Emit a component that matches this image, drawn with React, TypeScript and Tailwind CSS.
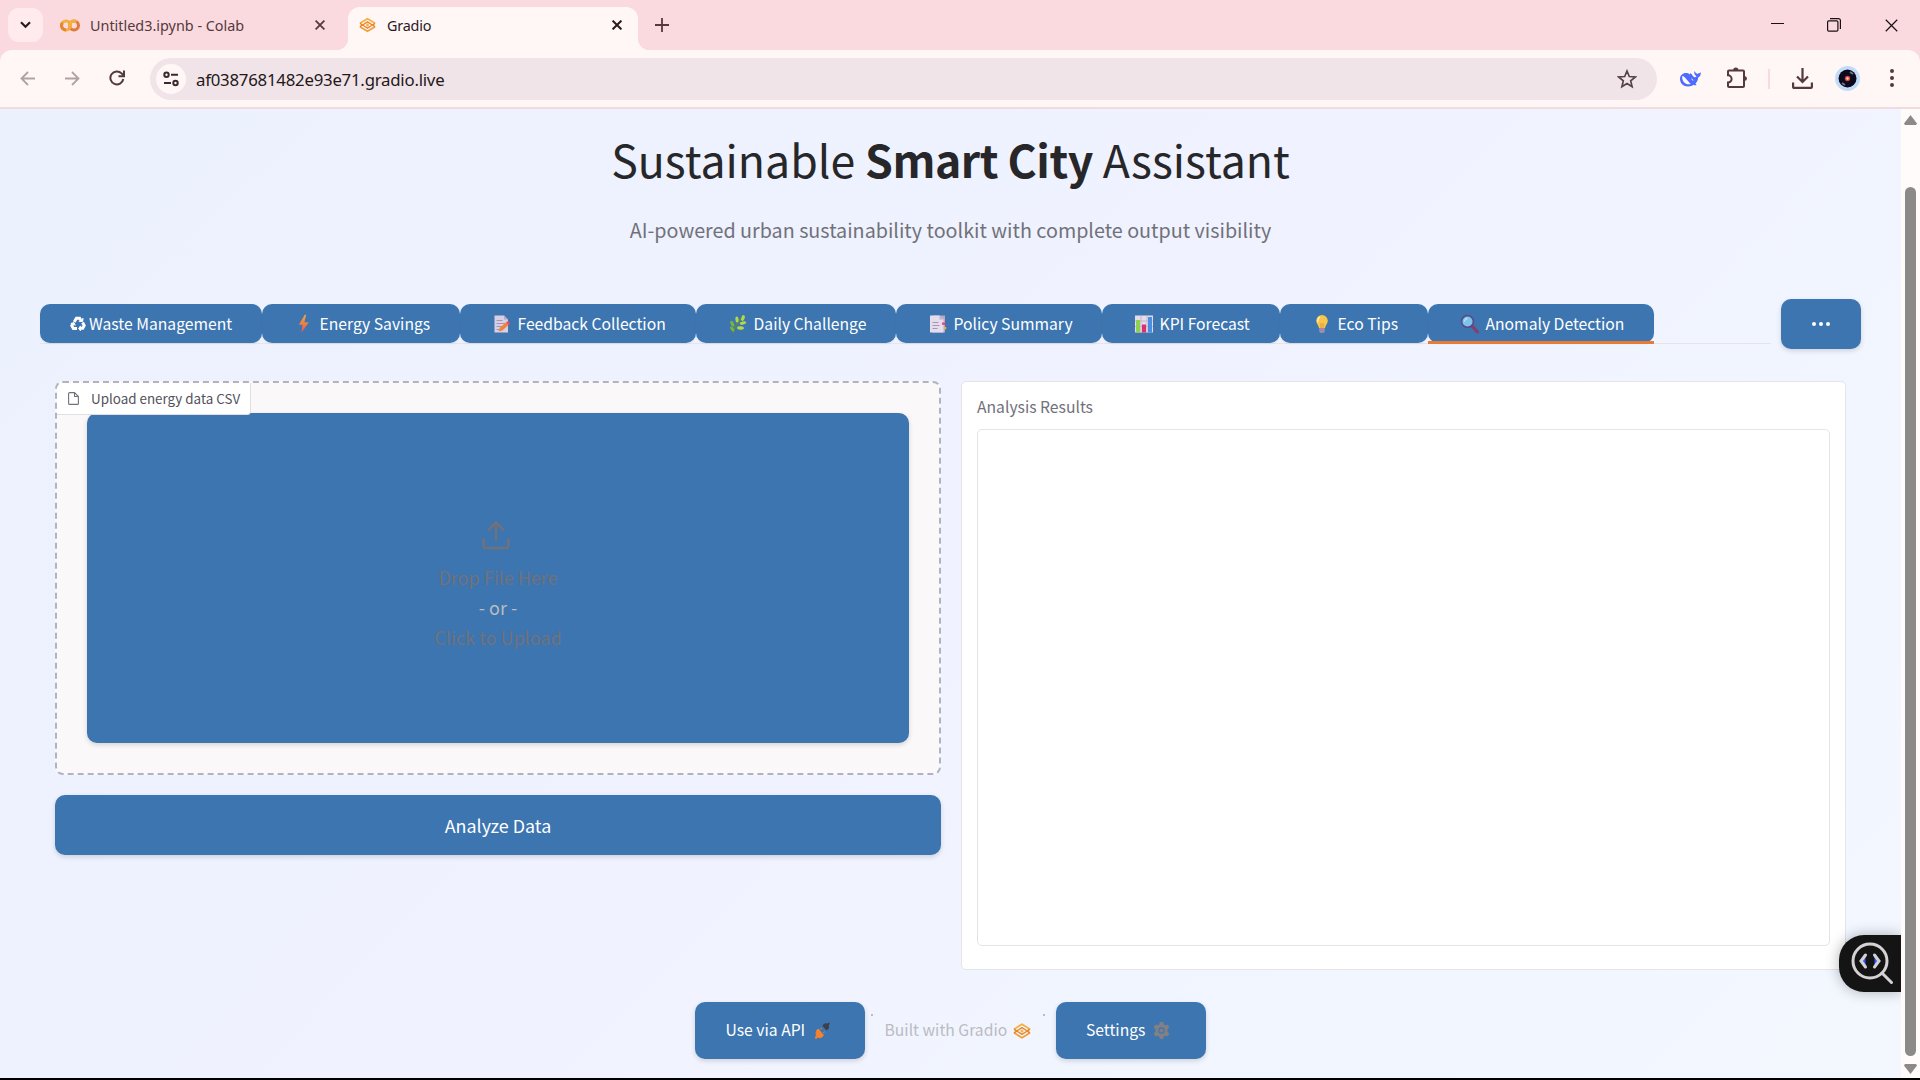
import React from "react";

const SANS = "font-['Noto_Sans_CJK_SC',sans-serif]";

type IconProps = { className?: string };

const Cross = ({ s = 10, w = 1.8 }: { s?: number; w?: number }) => (
  <svg width={s} height={s} viewBox="0 0 10 10" fill="none" stroke="currentColor" strokeWidth={w} className="shrink-0">
    <path d="M.6.6 9.4 9.4M9.4.6.6 9.4" />
  </svg>
);

const GradioLogo = ({ className = "" }: IconProps) => (
  <svg viewBox="0 0 18 16" className={className} fill="none" strokeLinejoin="round" strokeWidth="1.900">
    <path d="M1 6.200 9 1.300l8 4.900" stroke="#f3b340" />
    <path d="m1 9.800 8 4.900 8-4.900" stroke="#f0a238" />
    <path d="M1 6.200 3.800 8 1 9.800M17 6.200 14.200 8 17 9.800" stroke="#e8842c" strokeWidth="1.500" />
    <path d="M3.800 8 9 4.700 14.200 8 9 11.300z" stroke="#e8842c" strokeWidth="1.400" />
    <circle cx="9" cy="8" r="1.500" fill="#f3b340" />
  </svg>
);

const Recycle = () => (
  <svg viewBox="0 0 16 16" width="16" height="16" fill="none" stroke="#fff" strokeWidth="3">
    <path d="m4.200 6 2.200-3.700h3.200l1 1.700" />
    <path d="m12.600 6.500 1.600 2.900-1.500 2.900H9.600" />
    <path d="M7 12.600H3.400L1.800 9.700 3 7.500" />
    <path d="m8.700 5.200 3.900.4.500-3.500M10.700 9.800l-2.200 2.700 2.200 2.500M.8 7.500l3.200-.9 1.300 3" strokeWidth="1" fill="#fff" />
  </svg>
);
const Bolt = () => (
  <svg viewBox="0 0 20 20" width="20" height="20">
    <defs><linearGradient id="bolt" x1="0" y1="0" x2="0" y2="1"><stop stopColor="#f5a63c" /><stop offset="1" stopColor="#e8554b" /></linearGradient></defs>
    <path d="M10.800.8 4.800 10.800h3.700L7.400 18.800 14.800 8.300H10.400L12.200.8z" fill="url(#bolt)" />
  </svg>
);
const Memo = () => (
  <svg viewBox="0 0 20 20" width="20" height="20">
    <path d="M2.500 1.500h9.500l4 4v13H2.500z" fill="#d9cfe4" />
    <path d="M12 1.500v4h4z" fill="#b7a7c9" />
    <path d="M4.500 6.500h6M4.500 9.500h9M4.500 12.500h7M4.500 15.500h4" stroke="#a596b5" strokeWidth="1.100" />
    <path d="m6.500 17.500 1.500-4 6-5 2.300 2.700-6 5.200z" fill="#f0843c" /><path d="m14 8.500 2-1.500 2.200 2.700-1.900 1.500z" fill="#ec4b5e" />
  </svg>
);
const Herb = () => (
  <svg viewBox="0 0 20 20" width="20" height="20">
    <path d="M5 19C7 12 10 7 15 3" stroke="#5f8f35" strokeWidth="1.400" fill="none" />
    <g fill="#b5d84a"><ellipse cx="15" cy="4" rx="1.700" ry="3" transform="rotate(20 15 4)" /><ellipse cx="9" cy="5.500" rx="1.600" ry="3" transform="rotate(-5 9 5.500)" /><ellipse cx="15" cy="9" rx="3.200" ry="1.500" transform="rotate(-12 15 9)" /><ellipse cx="12.500" cy="14" rx="3.500" ry="1.700" transform="rotate(5 12.500 14)" /></g>
    <g fill="#7fb23c"><ellipse cx="4.300" cy="9.800" rx="1.600" ry="3.200" transform="rotate(-25 4.300 9.800)" /><ellipse cx="4.200" cy="15" rx="1.400" ry="2.800" transform="rotate(-40 4.200 15)" /></g>
  </svg>
);
const BookmarkTabs = () => (
  <svg viewBox="0 0 20 20" width="20" height="20">
    <path d="M4.500 1.500H17v17H4.500z" fill="#b8a9c9" />
    <path d="M2 1.500h9.500l4 4v13H2z" fill="#e5dcec" />
    <path d="M11.500 1.500v4h4z" fill="#bfb0cf" />
    <path d="M4.500 8.500h6M4.500 11.500h7M4.500 14.500h5" stroke="#a596b5" strokeWidth="1.100" />
    <path d="M14 8.500h3.500v2.300H14z" fill="#e8437c" /><path d="M16 13h2.300v2.300H16z" fill="#eeb03a" />
  </svg>
);
const Chart = () => (
  <svg viewBox="0 0 20 20" width="20" height="20">
    <path d="M1 1.500h18v17H1z" fill="#e4dcea" /><path d="M1 7h18M1 12.500h18M7 1.500v17M13 1.500v17" stroke="#bbaec8" strokeWidth=".8" />
    <path d="M2 6h4v12.500H2z" fill="#92d04f" /><path d="M8 10.500h4v8H8z" fill="#d8326f" /><path d="M14 3h4v15.500h-4z" fill="#4a8fe0" />
  </svg>
);
const Bulb = () => (
  <svg viewBox="0 0 20 20" width="20" height="20">
    <path d="M10 1a5.800 5.800 0 0 0-5.800 5.800c0 3 2.300 4.200 2.800 7.200h6c.5-3 2.800-4.200 2.800-7.200A5.800 5.800 0 0 0 10 1z" fill="#f8c64b" />
    <path d="M8 3c-2 1-2.500 3-2 5" stroke="#fdeeb0" strokeWidth="1.500" fill="none" /><path d="M9 9v5M11 9v5" stroke="#dd8a35" strokeWidth=".8" />
    <path d="M7.200 14h5.600v3.500L11.500 19h-3l-1.300-1.500z" fill="#9a8fa8" />
  </svg>
);
const Lens = () => (
  <svg viewBox="0 0 20 20" width="20" height="20">
    <path d="m12 12 5.500 6" stroke="#873d70" strokeWidth="3.200" strokeLinecap="round" />
    <circle cx="7.500" cy="7.500" r="5.900" fill="#7cc4ea" stroke="#5a4a86" strokeWidth="1.600" />
    <path d="M4.500 7.500a3 3 0 0 1 3-3" stroke="#b9e5fa" strokeWidth="1.300" fill="none" />
  </svg>
);

const TABS: { label: string; w: string; icon: React.ReactNode }[] = [
  { label: "Waste Management", w: "w-[222px]", icon: <Recycle /> },
  { label: "Energy Savings", w: "w-[198px]", icon: <Bolt /> },
  { label: "Feedback Collection", w: "w-[236px]", icon: <Memo /> },
  { label: "Daily Challenge", w: "w-[200px]", icon: <Herb /> },
  { label: "Policy Summary", w: "w-[206px]", icon: <BookmarkTabs /> },
  { label: "KPI Forecast", w: "w-[178px]", icon: <Chart /> },
  { label: "Eco Tips", w: "w-[148px]", icon: <Bulb /> },
  { label: "Anomaly Detection", w: "w-[226px]", icon: <Lens /> },
];

const TabStrip = () => (
  <div className="flex h-[50px] items-end bg-[#fadade] pl-2 font-['Noto_Sans',sans-serif] text-[14.400px] text-[#54393f]">
    <div className="mb-2 flex h-[34px] w-[35px] items-center justify-center rounded-[11px] bg-[#ffebee]">
      <svg width="11" height="8" viewBox="0 0 11 8" fill="none" stroke="#2b1a1d" strokeWidth="2.200"><path d="m1 1.300 4.500 4.500L10 1.300" /></svg>
    </div>
    <div className="flex h-[50px] w-[305px] items-center pl-[17px]">
      <svg width="20" height="13" viewBox="0 0 20 13" fill="none" strokeWidth="3">
        <circle cx="6" cy="6.500" r="4.500" stroke="#f4b13a" /><path d="M6 11A4.500 4.500 0 0 1 2.500 3.700" stroke="#e8852f" />
        <circle cx="14" cy="6.500" r="4.500" stroke="#e2793a" /><path d="M10.800 9.700A4.500 4.500 0 0 1 16.500 2.800" stroke="#f4b13a" />
      </svg>
      <span className="ml-[10px] mt-px w-[225px] whitespace-nowrap">Untitled3.ipynb - Colab</span>
      <Cross />
    </div>
    <div className="relative flex h-[43px] w-[290px] items-center rounded-t-[12px] bg-[#fff6f6] pb-[7px] pl-[11px] text-[#2b1a1d]">
      <div className="absolute bottom-0 -left-3 h-3 w-3 bg-[radial-gradient(circle_at_0_0,#fadade_12px,#fff6f6_12.5px)]" />
      <div className="absolute bottom-0 -right-3 h-3 w-3 bg-[radial-gradient(circle_at_100%_0,#fadade_12px,#fff6f6_12.5px)]" />
      <GradioLogo className="h-4 w-[17px]" />
      <span className="ml-[11px] mt-px w-[225px] tracking-[-0.2px]">Gradio</span>
      <Cross w={2} />
    </div>
    <svg width="14" height="14" viewBox="0 0 14 14" stroke="#54393f" strokeWidth="1.800" className="mb-[18px] ml-[17px]"><path d="M7 0v14M0 7h14" /></svg>
    <div className="mb-[18px] ml-auto flex items-center pr-[22px] text-[#1a1013]">
      <svg width="13" height="14" viewBox="0 0 13 14" stroke="currentColor"><path d="M0 5.500h13" /></svg>
      <svg width="14" height="14" viewBox="0 0 14 14" fill="none" stroke="currentColor" strokeWidth="1.200" className="ml-[43px]"><rect x=".6" y="2.900" width="10.300" height="10.300" rx="1.200" /><path d="M3 .6h8.400a2 2 0 0 1 2 2V11" /></svg>
      <div className="ml-[44px]"><Cross s={13} w={0.9} /></div>
    </div>
  </div>
);

const Toolbar = () => (
  <div className="bg-[#fadade]">
    <div className="flex h-[59px] items-center rounded-t-[12px] border-b-2 border-[#f3dadf] bg-[#fff6f6] pl-5 text-[#54393f]">
      <svg width="15" height="15" viewBox="0 0 15 15" fill="none" stroke="#b3a2a5" strokeWidth="1.800"><path d="M15 7.500H1.500M8 1 1.500 7.500 8 14" /></svg>
      <svg width="15" height="15" viewBox="0 0 15 15" fill="none" stroke="#b3a2a5" strokeWidth="1.800" className="ml-[30px]"><path d="M0 7.500h13.500M7 1l6.500 6.500L7 14" /></svg>
      <svg width="16" height="16" viewBox="0 0 16 16" fill="none" stroke="#54393f" strokeWidth="2" className="mb-px ml-[29px]"><path d="M14.300 9A6.500 6.500 0 1 1 12.600 3.400L14.500 5.500" /><path d="M15 .5v5.700H9.500" /></svg>
      <div className="ml-[25px] flex h-[42px] w-[1507px] items-center rounded-full bg-[#f1e4e8] pl-[6px] pr-[20px]">
        <div className="flex h-[30px] w-[30px] items-center justify-center rounded-full bg-[#fff6f6]">
          <svg width="16" height="16" viewBox="0 0 16 16" fill="none" stroke="#3b292d" strokeWidth="2"><circle cx="3.500" cy="3.700" r="2.200" /><path d="M8 3.700h7M1 12h7" /><circle cx="12.500" cy="12" r="2.200" /></svg>
        </div>
        <span className="ml-[10px] mt-[2px] font-['Noto_Sans',sans-serif] text-[16.800px] tracking-[-0.230px] text-[#24181b]">af0387681482e93e71.gradio.live</span>
        <svg width="20" height="20" viewBox="0 0 20 20" fill="none" stroke="#54434a" strokeWidth="1.700" className="ml-auto"><path d="m10 2 2.300 5.500 6 .5-4.600 3.900 1.400 5.800L10 14.600l-5.100 3.100 1.400-5.800L1.700 8l6-.5z" /></svg>
      </div>
      <svg width="21" height="16" viewBox="0 0 21 16" className="ml-[23px]">
        <path d="M10 3.500C5.500 0 0 3 0 8c0 4.500 3.500 7.500 8 7.500 2.500 0 4-.7 5.500-1.700 1 .6 2 .7 3.200.2-.7-.3-1-.8-1.200-1.600 2-2 2.500-4 2.700-6C20 6 21 3.500 20.800 1.200c-1.300 1.200-2.500.8-3.500 1.800C16.500 2 15.500 2 14.500 0c-.8 2.300.2 4 2 5.200-.5 1-1.500 1.300-2.500.8-1.500-.8-1.500-2.700-4-4z" fill="#4d6bfe" />
        <path d="M2.300 5c3 .5 4.500 4.500 8.500 8-4.500 1.500-9.500-2.500-8.500-8zM11 7.500c1.500 0 2.500 1.500 2.300 2.700z" fill="#fff6f6" />
      </svg>
      <svg width="22" height="22" viewBox="0 0 22 22" className="mb-px ml-[25px]"><path d="M3 3.500h14a1 1 0 0 1 1 1V19a1 1 0 0 1-1 1H3a1 1 0 0 1-1-1v-3.500a3.600 3.600 0 0 0 0-7.200V4.500a1 1 0 0 1 1-1z" fill="none" stroke="#54393f" strokeWidth="2" /><path d="M7.200 3a2.600 2.600 0 0 1 5.200 0zM18.500 9a2.500 2.500 0 0 1 0 5z" fill="#54393f" /></svg>
      <div className="ml-[20px] h-5 w-[2px] bg-[#fadade]" />
      <svg width="21" height="21" viewBox="0 0 21 21" fill="none" stroke="#54393f" strokeWidth="2.200" className="ml-[22px]"><path d="M10.500 0v13.500M5 8.500l5.500 5.500L16 8.500M1.100 14.500v4.400a1 1 0 0 0 1 1h16.800a1 1 0 0 0 1-1v-4.400" /></svg>
      <svg width="25" height="25" viewBox="0 0 25 25" className="mb-px ml-[22px]"><circle cx="12.500" cy="12.500" r="12.500" fill="#c2dcf8" /><circle cx="12.500" cy="12.500" r="9" fill="#0c0a1c" /><path d="m15 6 3 2M7 17l3 2" stroke="#6f7485" strokeWidth="2" /><circle cx="12.500" cy="12.500" r="2.700" fill="#d8404f" /><circle cx="12.500" cy="12.500" r="1.200" fill="#ffe08a" /></svg>
      <svg width="4" height="18" viewBox="0 0 4 18" fill="#54393f" className="mb-px ml-[30px]"><circle cx="2" cy="2" r="2" /><circle cx="2" cy="9" r="2" /><circle cx="2" cy="16" r="2" /></svg>
    </div>
  </div>
);

const BTN = "flex items-center rounded-[10px] bg-[#3c75b0] text-white shadow-[0_2px_5px_rgba(0,0,0,0.15)]";

const NavTabs = () => (
  <div className="mt-[53px] flex h-[50px] items-center pl-10">
    <div className="flex h-[40px] w-[1731px] items-start shadow-[inset_0_-1px_0_#e4e4e9]">
      {TABS.map((t, i) => (
        <div key={t.label} className={`${t.w} relative flex h-[39px] shrink-0 items-center whitespace-nowrap rounded-[10px] bg-[#3c75b0] text-[15.700px] text-white shadow-[0_1px_2px_rgba(0,0,0,0.06)]`}>
          <div className={i === 0 ? "ml-[30px] flex w-[19px]" : "ml-[32px] flex w-[25.500px]"}>{t.icon}</div>
          <span>{t.label}</span>
          {i === 7 && <div className="absolute inset-x-0 -bottom-px h-[3px] bg-[#e87b35]" />}
        </div>
      ))}
    </div>
    <div className={`${BTN} ml-[10px] h-[50px] w-20 justify-center gap-[3px]`}>
      <i className="h-1 w-1 rounded-full bg-white" /><i className="h-1 w-1 rounded-full bg-white" /><i className="h-1 w-1 rounded-full bg-white" />
    </div>
  </div>
);

const UploadPanel = () => (
  <div className="w-[886px]">
    <div className="relative h-[394px] rounded-[8px] border-2 border-dashed border-[#b1b3c1] bg-[#faf8f9] px-[30px] pt-[30px]">
      <div className="flex h-[330px] flex-col items-center rounded-[10px] bg-[#3c75b0] pt-[107px] text-[18px] leading-[30px] text-[#71717a] shadow-[0_2px_5px_rgba(0,0,0,0.15)]">
        <svg width="30" height="30" viewBox="0 0 30 30" fill="none" stroke="#71717a" strokeWidth="2.500" strokeLinecap="round" strokeLinejoin="round" className="mr-1"><path d="M15 20V2.500M8 9.500l7-7 7 7M2.500 19.500v6a2.500 2.500 0 0 0 2.500 2.500h20a2.500 2.500 0 0 0 2.500-2.500v-6" /></svg>
        <span className="mt-[12px]">Drop File Here</span>
        <span className="text-[#bbbbc2]">- or -</span>
        <span>Click to Upload</span>
      </div>
      <div className="absolute left-0 top-0 flex h-[32px] w-[194px] items-center rounded-br-[4px] rounded-tl-[6px] border-b border-r border-[#dfdfe4] bg-white text-[13.400px] text-[#52525b]">
        <svg width="11" height="13" viewBox="0 0 11 13" fill="none" stroke="#71717a" strokeWidth="1.100" className="ml-[11px]"><path d="M6.500.6H1.600a1 1 0 0 0-1 1v9.800a1 1 0 0 0 1 1h7.800a1 1 0 0 0 1-1V4.500zM6.500.6v3.900h3.900" /></svg>
        <span className="ml-3 whitespace-nowrap">Upload energy data CSV</span>
      </div>
    </div>
    <div className={`${BTN} mt-5 h-[60px] justify-center text-[17.900px]`}>Analyze Data</div>
  </div>
);

const Footer = () => (
  <div className="mt-[32px] flex h-[57px] items-center pl-[695px] text-[15.700px]">
    <div className={`${BTN} h-[57px] w-[170px] pl-[30.500px]`}>
      <span className="mb-px">Use via API</span>
      <svg width="15" height="17" viewBox="0 0 17 17" preserveAspectRatio="none" className="ml-[10px]"><path d="M8.500 4 13 8.500c2.500-1 3.500-3 2.500-5l1.200-1.800L15.500.5 13.700 1.700c-2.200-1-4 0-5.200 2.300z" fill="#3f3f4a" /><path d="m3.500 7 6 6c-1 2.500-4 3.500-6.500 2l-1.800 1.700L0 15.500l1.700-1.800C.5 11 1.500 8 3.500 7zM6 7.500l1.500-1.500M9.500 11l1.500-1.500" fill="#f5822f" stroke="#f5822f" strokeWidth="1" /></svg>
    </div>
    <span className="ml-[6px] mt-3 h-[2px] w-[2px] self-start bg-[#bbbbc2]" />
    <span className="mb-px ml-[11.500px] w-[128.500px] whitespace-nowrap text-[#bbbbc2]">Built with Gradio</span>
    <GradioLogo className="h-4 w-[18px]" />
    <span className="ml-[12px] mt-3 h-[2px] w-[2px] self-start bg-[#bbbbc2]" />
    <div className={`${BTN} ml-[11px] h-[57px] w-[150px] pl-[30px]`}>
      <span className="mb-px">Settings</span>
      <svg width="17" height="17" viewBox="0 0 24 24" fill="#808085" className="ml-[8px]"><path fillRule="evenodd" d="M9.500 0h5l.7 3.400 2.100 1.200 3.300-1.100 2.500 4.300-2.600 2.300v3.800l2.600 2.300-2.500 4.300-3.300-1.100-2.100 1.200-.7 3.400h-5l-.7-3.400-2.100-1.200-3.300 1.100L.9 16.200l2.600-2.300v-3.800L.9 7.800l2.500-4.300 3.300 1.100 2.100-1.200zM12 7.500a4.500 4.500 0 1 0 0 9 4.500 4.500 0 0 0 0-9z" /><circle cx="12" cy="12" r="3" /></svg>
    </div>
  </div>
);

export default function App() {
  return (
    <div className={`flex h-[1080px] w-[1920px] flex-col overflow-hidden border-b-2 border-black ${SANS}`}>
      <TabStrip />
      <Toolbar />
      <div className="flex min-h-0 flex-1">
        <main className="relative w-[1901px] overflow-hidden bg-[linear-gradient(135deg,#ebf1fd_0%,#f0f3ff_50%,#f3f8ff_100%)]">
          <h1 className="mt-[18px] text-center text-[44.600px] leading-[64px] text-[#27272a]">Sustainable <b className="font-bold tracking-[-0.5px]">Smart City</b> Assistant</h1>
          <p className="mt-[22px] text-center text-[19.730px] leading-[33px] text-[#71717a]">AI-powered urban sustainability toolkit with complete output visibility</p>
          <NavTabs />
          <div className="mt-[32px] flex gap-5 pl-[55px]">
            <UploadPanel />
            <div className="h-[589px] w-[885px] rounded-[5px] border border-[#e4e4e9] bg-white px-[15px]">
              <div className="mt-[13px] text-[15.700px] leading-[24px] text-[#71717a]">Analysis Results</div>
              <div className="mt-[10px] h-[517px] rounded-[5px] border border-[#e4e4e7] bg-white" />
            </div>
          </div>
          <Footer />
          <div className="absolute right-0 top-[826px] flex h-[57px] w-[62.500px] items-center rounded-l-[25px] bg-[#141414] pl-[11px] shadow-[0_0_14px_rgba(0,0,0,0.3)]">
            <svg width="44" height="44" viewBox="0 0 44 44" fill="none" stroke="#d6d2d3" strokeWidth="3" strokeLinecap="round"><circle cx="20" cy="19" r="17" /><path d="m32 31 9.500 9.500" /><path d="m15.500 13-5 6 5 6zM24.500 13l5 6-5 6z" fill="#2b5cff" stroke="none" /><path d="m15.500 13-4.500 6 4.500 6M24.500 13l4.500 6-4.500 6" /></svg>
          </div>
        </main>
        <div className="flex w-[19px] flex-col items-center bg-[#fffbfb] pt-[6px]">
          <svg width="13" height="10" viewBox="0 0 13 10" fill="#8c8989"><path d="M6.500 0 13 8.500 12 10H1L0 8.500z" /></svg>
          <div className="mt-[62px] h-[869px] w-[11px] rounded-full bg-[#8c8989]" />
          <svg width="13" height="10" viewBox="0 0 13 10" fill="#8c8989" className="mt-2"><path d="M6.500 10 13 1.500 12 0H1L0 1.500z" /></svg>
        </div>
      </div>
    </div>
  );
}
